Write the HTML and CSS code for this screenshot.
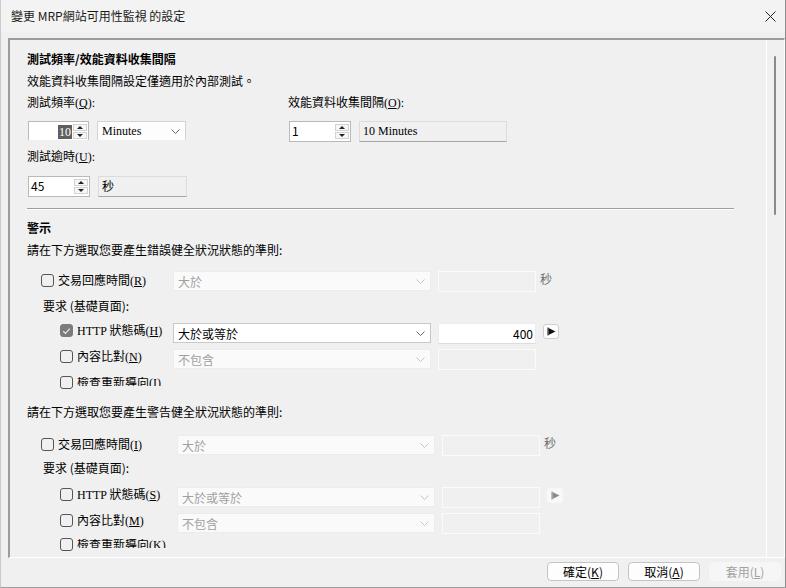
FILE: index.html
```html
<!DOCTYPE html>
<html lang="zh-Hant">
  <head>
    <meta charset="utf-8">
    <title>變更 MRP網站可用性監視 的設定</title>
    <link rel="stylesheet" href="styles.css">
  </head>
  <body>
    <div class="window">
      <div class="titlebar">
        <span class="title">變更 MRP網站可用性監視 的設定</span>
        <svg class="close" width="11" height="11" viewBox="0 0 11 11"><path d="M0.5 0.5L10.5 10.5M10.5 0.5L0.5 10.5" stroke="#222" stroke-width="1"/></svg>
      </div>

      <div class="panel">
        <div class="panel-body">
          <div class="heading">測試頻率/效能資料收集間隔</div>
          <div class="line">效能資料收集間隔設定僅適用於內部測試。</div>

          <div class="top-grid">
            <div class="label">測試頻率(<u>Q</u>):</div>
            <div class="label">效能資料收集間隔(<u>O</u>):</div>

            <div class="controls clip">
              <div class="spin narrow">
                <div class="spin-val right"><span class="sel">10</span></div>
                <div class="spin-btns"><span class="up"></span><span class="down"></span></div>
              </div>
              <div class="combo small">
                <span class="serif">Minutes</span>
                <svg width="9" height="5" viewBox="0 0 9 5"><path d="M0.5 0.5L4.5 4.5L8.5 0.5" fill="none" stroke="#666"/></svg>
              </div>
            </div>
            <div class="controls">
              <div class="spin">
                <div class="spin-val">1</div>
                <div class="spin-btns"><span class="up"></span><span class="down"></span></div>
              </div>
              <div class="readonly wide serif">10 Minutes</div>
            </div>

            <div class="label timeout">測試逾時(<u>U</u>):</div>
            <div></div>

            <div class="controls late">
              <div class="spin">
                <div class="spin-val">45</div>
                <div class="spin-btns"><span class="up"></span><span class="down"></span></div>
              </div>
              <div class="readonly small">秒</div>
            </div>
          </div>

          <div class="sep"></div>

          <div class="heading alert">警示</div>

          <!-- error criteria -->
          <div class="s1">
            <div class="line">請在下方選取您要產生錯誤健全狀況狀態的準則:</div>
            <div class="crit r1">
              <div class="crit-name top"><span class="box"></span><span class="lbl">交易回應時間(<u>R</u>)</span></div>
              <div class="combo off">大於<svg width="9" height="5" viewBox="0 0 9 5"><path d="M0.5 0.5L4.5 4.5L8.5 0.5" fill="none" stroke="#c6c6c6"/></svg></div>
              <div class="text"></div>
              <span class="unit">秒</span>
            </div>
            <div class="line req">要求 (基礎頁面):</div>
            <div class="crit r2">
              <div class="crit-name sub"><span class="box checked"><svg width="9" height="8" viewBox="0 0 9 8"><path d="M1.2 4.2L3.5 6.4L7.8 1.6" fill="none" stroke="#e8e8e8" stroke-width="1.2"/></svg></span><span class="lbl">HTTP 狀態碼(<u>H</u>)</span></div>
              <div class="combo on">大於或等於<svg width="9" height="5" viewBox="0 0 9 5"><path d="M0.5 0.5L4.5 4.5L8.5 0.5" fill="none" stroke="#666"/></svg></div>
              <div class="text on">400</div>
              <div class="go"><svg width="9" height="9" viewBox="0 0 9 9"><path d="M1 0.5V8.5" stroke="#111"/><path d="M1.5 1L8.5 4.5L1.5 8Z" fill="#111"/></svg></div>
            </div>
            <div class="crit r3">
              <div class="crit-name sub"><span class="box"></span><span class="lbl">內容比對(<u>N</u>)</span></div>
              <div class="combo off">不包含<svg width="9" height="5" viewBox="0 0 9 5"><path d="M0.5 0.5L4.5 4.5L8.5 0.5" fill="none" stroke="#c6c6c6"/></svg></div>
              <div class="text"></div>
            </div>
            <div class="crit r4">
              <div class="crit-name sub"><span class="box"></span><span class="cut"><span class="lbl">檢查重新導向(<u>I</u>)</span></span></div>
            </div>
          </div>

          <!-- warning criteria -->
          <div class="s2">
            <div class="line">請在下方選取您要產生警告健全狀況狀態的準則:</div>
            <div class="crit r1">
              <div class="crit-name top"><span class="box"></span><span class="lbl">交易回應時間(<u>I</u>)</span></div>
              <div class="combo off">大於<svg width="9" height="5" viewBox="0 0 9 5"><path d="M0.5 0.5L4.5 4.5L8.5 0.5" fill="none" stroke="#c6c6c6"/></svg></div>
              <div class="text"></div>
              <span class="unit">秒</span>
            </div>
            <div class="line req">要求 (基礎頁面):</div>
            <div class="crit r2">
              <div class="crit-name sub"><span class="box"></span><span class="lbl">HTTP 狀態碼(<u>S</u>)</span></div>
              <div class="combo off">大於或等於<svg width="9" height="5" viewBox="0 0 9 5"><path d="M0.5 0.5L4.5 4.5L8.5 0.5" fill="none" stroke="#c6c6c6"/></svg></div>
              <div class="text"></div>
              <div class="go off"><svg width="9" height="9" viewBox="0 0 9 9"><path d="M1 0.5V8.5" stroke="#8a8a8a"/><path d="M1.5 1L8.5 4.5L1.5 8Z" fill="#8a8a8a"/></svg></div>
            </div>
            <div class="crit r3">
              <div class="crit-name sub"><span class="box"></span><span class="lbl">內容比對(<u>M</u>)</span></div>
              <div class="combo off">不包含<svg width="9" height="5" viewBox="0 0 9 5"><path d="M0.5 0.5L4.5 4.5L8.5 0.5" fill="none" stroke="#c6c6c6"/></svg></div>
              <div class="text"></div>
            </div>
            <div class="crit r4">
              <div class="crit-name sub"><span class="box"></span><span class="cut"><span class="lbl">檢查重新導向(<u>K</u>)</span></span></div>
            </div>
          </div>
        </div>
        <div class="scrollbar"><div class="thumb"></div></div>
      </div>

      <div class="footer">
        <div class="btn">確定(<u>K</u>)</div>
        <div class="btn">取消(<u>A</u>)</div>
        <div class="btn off">套用(<u>L</u>)</div>
      </div>
    </div>
  </body>
</html>
```

FILE: styles.css
```css
* {
  box-sizing: border-box;
}
body {
  margin: 0;
  background: #f0f0f0;
  font-family: "Noto Sans CJK TC", "Noto Sans", sans-serif;
  font-size: 12px;
  color: #000;
}
u {
  text-underline-offset: 1px;
}
.serif,
.label,
.lbl {
  font-family: "Liberation Serif", "Noto Sans CJK TC", serif;
}

.window {
  width: 786px;
  height: 588px;
  display: flex;
  flex-direction: column;
  background: #f0f0f0;
  border-left: 1px solid #cbcbcb;
  border-right: 1px solid #8d8d8d;
  border-bottom: 1px solid #9d9d9d;
}
.titlebar {
  height: 32px;
  flex: none;
  display: flex;
  align-items: center;
  justify-content: space-between;
  padding: 0 9px 0 10px;
  background: #f3f3f3;
  color: #1b1b1b;
}
.title {
  line-height: 16px;
}

/* sunken scrolling panel */
.panel {
  height: 520px;
  flex: none;
  margin: 6px 0 0 7px;
  display: flex;
  border-top: 2px solid #9c9c9c;
  border-left: 2px solid #9c9c9c;
  border-right: 1px solid #fff;
  border-bottom: 1px solid #fff;
}
.panel-body {
  flex: 1;
  overflow: hidden;
  padding: 8px 32px 0 17px;
}
.scrollbar {
  width: 18px;
  flex: none;
  border-left: 1px solid #fff;
  padding: 16px 0 0 7px;
}
.thumb {
  width: 2px;
  height: 159px;
  background: #8a8a8a;
  border-radius: 1px;
}

.heading {
  font-weight: bold;
  line-height: 22px;
}
.line {
  line-height: 22px;
}

.top-grid {
  display: grid;
  grid-template-columns: 261px 1fr;
}
.label {
  height: 23px;
  line-height: 23px;
}
.label.timeout {
  margin-top: 4px;
  height: 22px;
  line-height: 22px;
}
.controls {
  display: flex;
  gap: 8px;
  height: 21px;
  margin-top: 6px;
  padding-left: 1px;
}
.controls.clip {
  height: 19px;
  overflow: hidden;
}
.controls.late {
  margin-top: 8px;
}

.spin {
  width: 62px;
  height: 21px;
  display: flex;
  background: #fff;
  border: 1px solid #b9b9b9;
}
.spin.narrow {
  width: 61px;
}
.spin-val {
  flex: 1;
  padding: 0 2px;
  line-height: 18px;
}
.spin-val.right {
  text-align: right;
  padding-right: 1px;
}
.sel {
  background: #5f5f5f;
  color: #fff;
  padding: 0 1px;
  font-family: "Liberation Serif", serif;
}
.spin-btns {
  width: 15px;
  display: flex;
  flex-direction: column;
  gap: 1px;
  padding: 2px 1px 2px 0;
}
.spin-btns span {
  flex: 1;
  display: flex;
  align-items: center;
  justify-content: center;
  background: #f7f7f7;
  border: 1px solid #d2d2d2;
}
.spin-btns .up::after {
  content: "";
  border-left: 3px solid transparent;
  border-right: 3px solid transparent;
  border-bottom: 3px solid #222;
}
.spin-btns .down::after {
  content: "";
  border-left: 3px solid transparent;
  border-right: 3px solid transparent;
  border-top: 3px solid #222;
}

.combo {
  height: 20px;
  display: flex;
  align-items: center;
  justify-content: space-between;
  padding: 0 5px 0 4px;
  background: #fdfdfd;
  border: 1px solid #d3d3d3;
}
.combo.small {
  width: 89px;
}
.readonly {
  background: #f0f0f0;
  border: 1px solid #dcdcdc;
  border-bottom-color: #a5a5a5;
  padding: 0 3px;
  line-height: 18px;
}
.readonly.small {
  width: 89px;
}
.readonly.wide {
  width: 148px;
}

.sep {
  margin-top: 11px;
  height: 2px;
  border-top: 1px solid #a0a0a0;
  border-bottom: 1px solid #fff;
}
.heading.alert {
  margin-top: 7px;
}

/* criteria rows */
.crit {
  display: flex;
  height: 21px;
}
.crit-name {
  width: 146px;
  flex: none;
  display: flex;
  gap: 4px;
  padding-left: 14px;
  line-height: 16px;
}
.s2 .crit-name {
  width: 150px;
}
.crit-name.top {
  padding-top: 2px;
}
.crit-name.sub {
  padding-left: 33px;
}
.box {
  width: 13px;
  height: 13px;
  flex: none;
  margin-top: 1px;
  border: 1px solid #555;
  border-radius: 3px;
  display: flex;
  align-items: center;
  justify-content: center;
}
.box.checked {
  background: #7b7b7b;
  border-color: #7b7b7b;
}
.crit .combo {
  width: 258px;
}
.combo.on {
  background: #fff;
  border-color: #c8c8c8;
}
.combo.off {
  background: #fafafa;
  border-color: #ececec;
  color: #a0a0a0;
}
.text {
  width: 98px;
  height: 21px;
  margin-left: 7px;
  background: #f0f0f0;
  border: 1px solid #fbfbfb;
}
.text.on {
  background: #fff;
  border-color: #ececec;
  border-bottom-color: #dcdcdc;
  text-align: right;
  padding-right: 2px;
  line-height: 19px;
}
.unit {
  margin-left: 4px;
  color: #6d6d6d;
  line-height: 16px;
}
.go {
  width: 16px;
  height: 15px;
  margin: 1px 0 0 7px;
  display: flex;
  align-items: center;
  justify-content: center;
  background: #fdfdfd;
  border: 1px solid #cfcfcf;
  border-radius: 3px;
}
.go.off {
  background: #f8f8f8;
  border-color: #f8f8f8;
}
.crit.r4 {
  height: 13px;
}
.crit.r4 .box {
  margin-top: 0;
}
.cut {
  height: 9px;
  margin-top: 1px;
  overflow: hidden;
  line-height: 9px;
}
.req {
  padding-left: 16px;
}

.s1 .r1 { margin-top: 10px; }
.s1 .req { margin-top: 3px; }
.s1 .r2 { margin-top: 6px; }
.s1 .r3 { margin-top: 5px; }
.s1 .r4 { margin-top: 6px; }
.s2 { margin-top: 12px; }
.s2 .r1 { margin-top: 12px; }
.s2 .req { margin-top: 1px; }
.s2 .r2 { margin-top: 8px; }
.s2 .r3 { margin-top: 5px; }
.s2 .r4 { margin-top: 4px; }

.footer {
  flex: 1;
  display: flex;
  justify-content: flex-end;
  align-items: flex-start;
  gap: 9px;
  padding: 4px 4px 0 0;
}
.btn {
  width: 72px;
  height: 19px;
  text-align: center;
  line-height: 17px;
  background: #fdfdfd;
  border: 1px solid #c4c4c4;
  border-radius: 4px;
}
.btn.off {
  background: #f6f6f6;
  border-color: #f6f6f6;
  color: #a2a2a2;
}
```
